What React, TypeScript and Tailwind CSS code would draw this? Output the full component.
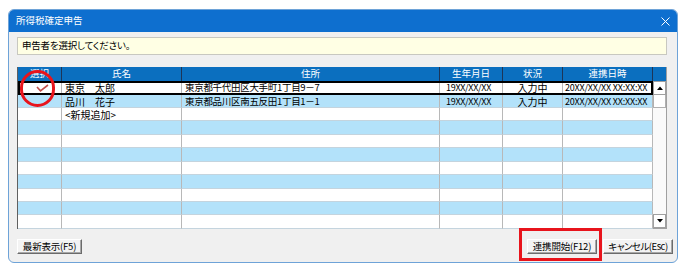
import React from "react";

const COLS = [45, 120, 258, 63, 60, 90];
const ROWH = [14, 13, 13, 14, 13, 14, 13, 14, 13, 13, 14];
const HEAD = ["選択", "氏名", "住所", "生年月日", "状況", "連携日時"];

type Row = { check?: boolean; name?: string; addr?: string; birth?: string; st?: string; dt?: string };
const DATA: Row[] = [
  { check: true, name: "東京　太郎", addr: "東京都千代田区大手町1丁目9－7", birth: "19XX/XX/XX", st: "入力中", dt: "20XX/XX/XX XX:XX:XX" },
  { name: "品川　花子", addr: "東京都品川区南五反田1丁目1－1", birth: "19XX/XX/XX", st: "入力中", dt: "20XX/XX/XX XX:XX:XX" },
  { name: "<新規追加>" },
];

const font = "font-['Noto_Sans_CJK_JP','Noto_Sans',sans-serif] [font-feature-settings:'palt']";

function Check() {
  return (
    <svg width="13" height="8" viewBox="0 0 13 8" className="ml-[6px]">
      <path d="M1 3 L4.5 6.8 L12 1" fill="none" stroke="#c0504d" strokeWidth="1.6" />
    </svg>
  );
}

function Btn({ children, w, extra = "" }: { children: React.ReactNode; w: string; extra?: string }) {
  return (
    <div
      className={`${w} h-[15px] flex items-center justify-center whitespace-nowrap overflow-hidden bg-[#f3f3f3] border-t border-l border-t-white border-l-white border-b border-r border-b-[#6b6b6b] border-r-[#6b6b6b] shadow-[inset_-1px_-1px_0_#a8a8a8] text-[9.5px] leading-none text-black ${extra}`}
    >
      {children}
    </div>
  );
}

export default function App() {
  return (
    <div className={`relative w-[685px] h-[270px] bg-white pt-[9px] pl-[8px] ${font}`}>
      <div className="w-[670px] h-[254px] rounded-[6px] border border-[#6ea3d8] overflow-hidden flex flex-col bg-[#f0f0f0]">
        <div className="h-[22px] bg-[#0e6fcf] flex items-center justify-between pl-[7px] pr-[7px]">
          <span className="text-[9.5px] text-white leading-none">所得税確定申告</span>
          <svg width="9" height="9" viewBox="0 0 9 9">
            <path d="M0.5 0.5 L8.5 8.5 M8.5 0.5 L0.5 8.5" stroke="white" strokeWidth="1" />
          </svg>
        </div>
        <div className="flex flex-col pl-[8px] pt-[5px]">
          <div className="w-[650px] h-[18px] bg-[#ffffe4] border border-[#c8c8c0] flex items-center pl-[4px] text-[9.5px] tracking-[-0.2px] leading-none text-black">
            申告者を選択してください。
          </div>
          <div className="mt-[12px] w-[650px] h-[162px] flex">
            <div className="w-[636px] flex flex-col border-l border-[#606060]">
              <div className="flex h-[14px] bg-[#0b6fbf]">
                {HEAD.map((h, i) => (
                  <div
                    key={i}
                    style={{ width: i === 0 ? COLS[i] - 1 : COLS[i] }}
                    className="h-full flex items-center justify-center border-r border-[#1d3557] text-[9.5px] text-white leading-none"
                  >
                    {h}
                  </div>
                ))}
              </div>
              {ROWH.map((rh, r) => {
                const d = DATA[r] || {};
                const blue = r % 2 === 1;
                const cells = [d.check ? <Check /> : null, d.name, d.addr, d.birth, d.st, d.dt];
                return (
                  <div key={r} style={{ height: rh }} className={`relative flex ${blue ? "bg-[#b3e2fa]" : "bg-white"}`}>
                    {cells.map((c, i) => (
                      <div
                        key={i}
                        style={{ width: i === 0 ? COLS[i] - 1 : COLS[i] }}
                        className={`h-full flex items-center overflow-hidden whitespace-pre border-r border-b border-r-[#b8b8b8] border-b-[#c4d4de] text-black leading-[11px] ${
                          i === 0 || i === 4 ? "justify-center" : ""
                        } ${i === 1 ? "pl-[3px] text-[10px]" : ""} ${i === 2 ? "pl-[3px] text-[9.5px] tracking-[-0.3px]" : ""} ${
                          i === 3 ? "pl-[6px] text-[9px] tracking-[-0.3px]" : ""
                        } ${i === 4 ? "text-[10px]" : ""} ${i === 5 ? "pl-[2px] text-[9px] tracking-[-0.2px]" : ""}`}
                      >
                        {c}
                      </div>
                    ))}
                    {d.check && <div className="absolute inset-0 border-2 border-black pointer-events-none" />}
                  </div>
                );
              })}
            </div>
            <div className="w-[14px] flex flex-col border-r border-b border-[#a0a0a0] bg-[#fafafa]">
              <div className="h-[14px] bg-[#0b6fbf]" />
              <div className="h-[14px] bg-white border border-[#a0a0a0] flex items-center justify-center">
                <svg width="6" height="4" viewBox="0 0 6 4"><path d="M0 4 L3 0.5 L6 4 Z" fill="#000" /></svg>
              </div>
              <div className="h-[13px] bg-white border border-[#b0b0b0] border-t-0" />
              <div className="flex-1" />
              <div className="h-[14px] bg-white border border-[#a0a0a0] flex items-center justify-center">
                <svg width="6" height="4" viewBox="0 0 6 4"><path d="M0 0 L3 3.5 L6 0 Z" fill="#000" /></svg>
              </div>
            </div>
          </div>
          <div className="mt-[10px] w-[656px] flex justify-between">
            <Btn w="w-[65px]" extra="tracking-[-0.2px]">最新表示(F5)</Btn>
            <div className="flex gap-[6px]">
              <Btn w="w-[70px]" extra="tracking-[-0.2px]">連携開始(F12)</Btn>
              <Btn w="w-[70px]" extra="tracking-[-0.5px]">キャンセル(Esc)</Btn>
            </div>
          </div>
        </div>
      </div>
      <div className="absolute left-[20px] top-[70px] w-[35px] h-[37px] rounded-full border-[3px] border-[#e8141c] pointer-events-none" />
      <div className="absolute left-[519px] top-[228px] w-[83px] h-[33px] border-[3px] border-[#e8141c] pointer-events-none" />
    </div>
  );
}
